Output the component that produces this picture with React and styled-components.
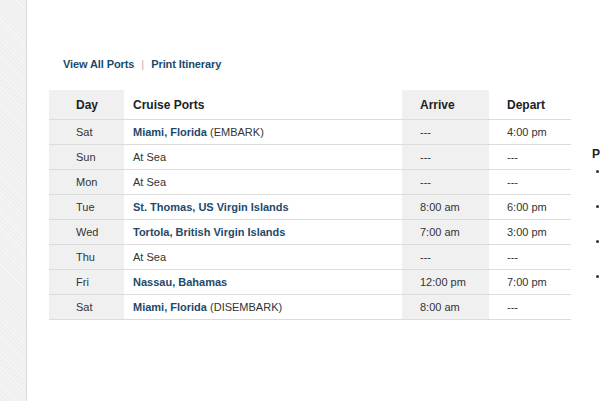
import React from "react";
import styled, { createGlobalStyle } from "styled-components";

const GlobalStyle = createGlobalStyle`
  html, body {
    margin: 0;
    padding: 0;
    background: #ffffff;
    overflow: hidden;
  }
  body {
    font-family: "Liberation Sans", Arial, sans-serif;
    color: #333;
  }
`;

const colors = {
  link: "#1d4a6c",
  shade: "#f0f0f0",
  line: "#dcdcdc",
};

const Page = styled.div`
  display: flex;
  width: 600px;
  height: 401px;
  overflow: hidden;
`;

const Strip = styled.div`
  flex: 0 0 26px;
  background-color: #f2f2f2;
  background-image: repeating-linear-gradient(
    45deg,
    #f5f5f5 0px,
    #f5f5f5 1px,
    #efefef 1px,
    #efefef 3px
  );
  border-right: 1px solid #dadada;
`;

const Main = styled.div`
  display: flex;
  gap: 21px;
  padding: 57px 0 0 22px;
  flex: 0 0 auto;
`;

const Content = styled.div`
  width: 522px;
`;

const Links = styled.div`
  display: flex;
  align-items: center;
  gap: 7px;
  padding-left: 14px;
  height: 13px;
  font-size: 11px;
  font-weight: bold;
  margin-bottom: 20px;
`;

const Link = styled.a`
  color: ${colors.link};
  text-decoration: none;
  letter-spacing: -0.1px;
`;

const Sep = styled.span`
  color: #b5b5b5;
  font-weight: normal;
`;

const Table = styled.table`
  width: 522px;
  border-collapse: collapse;
  table-layout: fixed;
`;

const Th = styled.th`
  height: 29px;
  padding: 0 0 0 ${(p) => p.$pad || 9}px;
  text-align: left;
  font-size: 12px;
  font-weight: bold;
  color: #222;
  background: ${(p) => (p.$shade ? colors.shade : "#fff")};
  border-bottom: 1px solid ${colors.line};
`;

const Td = styled.td`
  height: 24px;
  padding: 0 0 0 ${(p) => p.$pad || 9}px;
  text-align: left;
  font-size: 11px;
  color: #333;
  background: ${(p) => (p.$shade ? colors.shade : "#fff")};
  border-bottom: 1px solid ${colors.line};
  white-space: nowrap;
`;

const Port = styled.a`
  color: ${colors.link};
  font-weight: bold;
  text-decoration: none;
`;

const Side = styled.div`
  width: 150px;
  padding-top: 90px;
`;

const SideTitle = styled.div`
  font-size: 12px;
  font-weight: bold;
  color: #222;
  line-height: 14px;
`;

const SideList = styled.ul`
  margin: 1px 0 0 0;
  padding-left: 17px;
  font-size: 11px;
  color: #333;
  li {
    line-height: 17.5px;
    height: 35px;
  }
`;

const days = [
  { day: "Sat", port: "Miami, Florida", note: "(EMBARK)", arrive: "---", depart: "4:00 pm" },
  { day: "Sun", text: "At Sea", arrive: "---", depart: "---" },
  { day: "Mon", text: "At Sea", arrive: "---", depart: "---" },
  { day: "Tue", port: "St. Thomas, US Virgin Islands", arrive: "8:00 am", depart: "6:00 pm" },
  { day: "Wed", port: "Tortola, British Virgin Islands", arrive: "7:00 am", depart: "3:00 pm" },
  { day: "Thu", text: "At Sea", arrive: "---", depart: "---" },
  { day: "Fri", port: "Nassau, Bahamas", arrive: "12:00 pm", depart: "7:00 pm" },
  { day: "Sat", port: "Miami, Florida", note: "(DISEMBARK)", arrive: "8:00 am", depart: "---" },
];

export default function App() {
  return (
    <Page>
      <GlobalStyle />
      <Strip />
      <Main>
        <Content>
          <Links>
            <Link href="#">View All Ports</Link>
            <Sep>|</Sep>
            <Link href="#">Print Itinerary</Link>
          </Links>
          <Table>
            <colgroup>
              <col style={{ width: 75 }} />
              <col style={{ width: 278 }} />
              <col style={{ width: 87 }} />
              <col style={{ width: 82 }} />
            </colgroup>
            <thead>
              <tr>
                <Th $shade $pad={27}>Day</Th>
                <Th>Cruise Ports</Th>
                <Th $shade $pad={18}>Arrive</Th>
                <Th $pad={18}>Depart</Th>
              </tr>
            </thead>
            <tbody>
              {days.map((d, i) => (
                <tr key={i}>
                  <Td $shade $pad={27}>{d.day}</Td>
                  <Td>
                    {d.port ? <Port href="#">{d.port}</Port> : d.text}
                    {d.note ? ` ${d.note}` : null}
                  </Td>
                  <Td $shade $pad={18}>{d.arrive}</Td>
                  <Td $pad={18}>{d.depart}</Td>
                </tr>
              ))}
            </tbody>
          </Table>
        </Content>
        <Side>
          <SideTitle>Ports of Call</SideTitle>
          <SideList>
            <li>Miami, Florida</li>
            <li>St. Thomas</li>
            <li>Tortola</li>
            <li>Nassau</li>
          </SideList>
        </Side>
      </Main>
    </Page>
  );
}
